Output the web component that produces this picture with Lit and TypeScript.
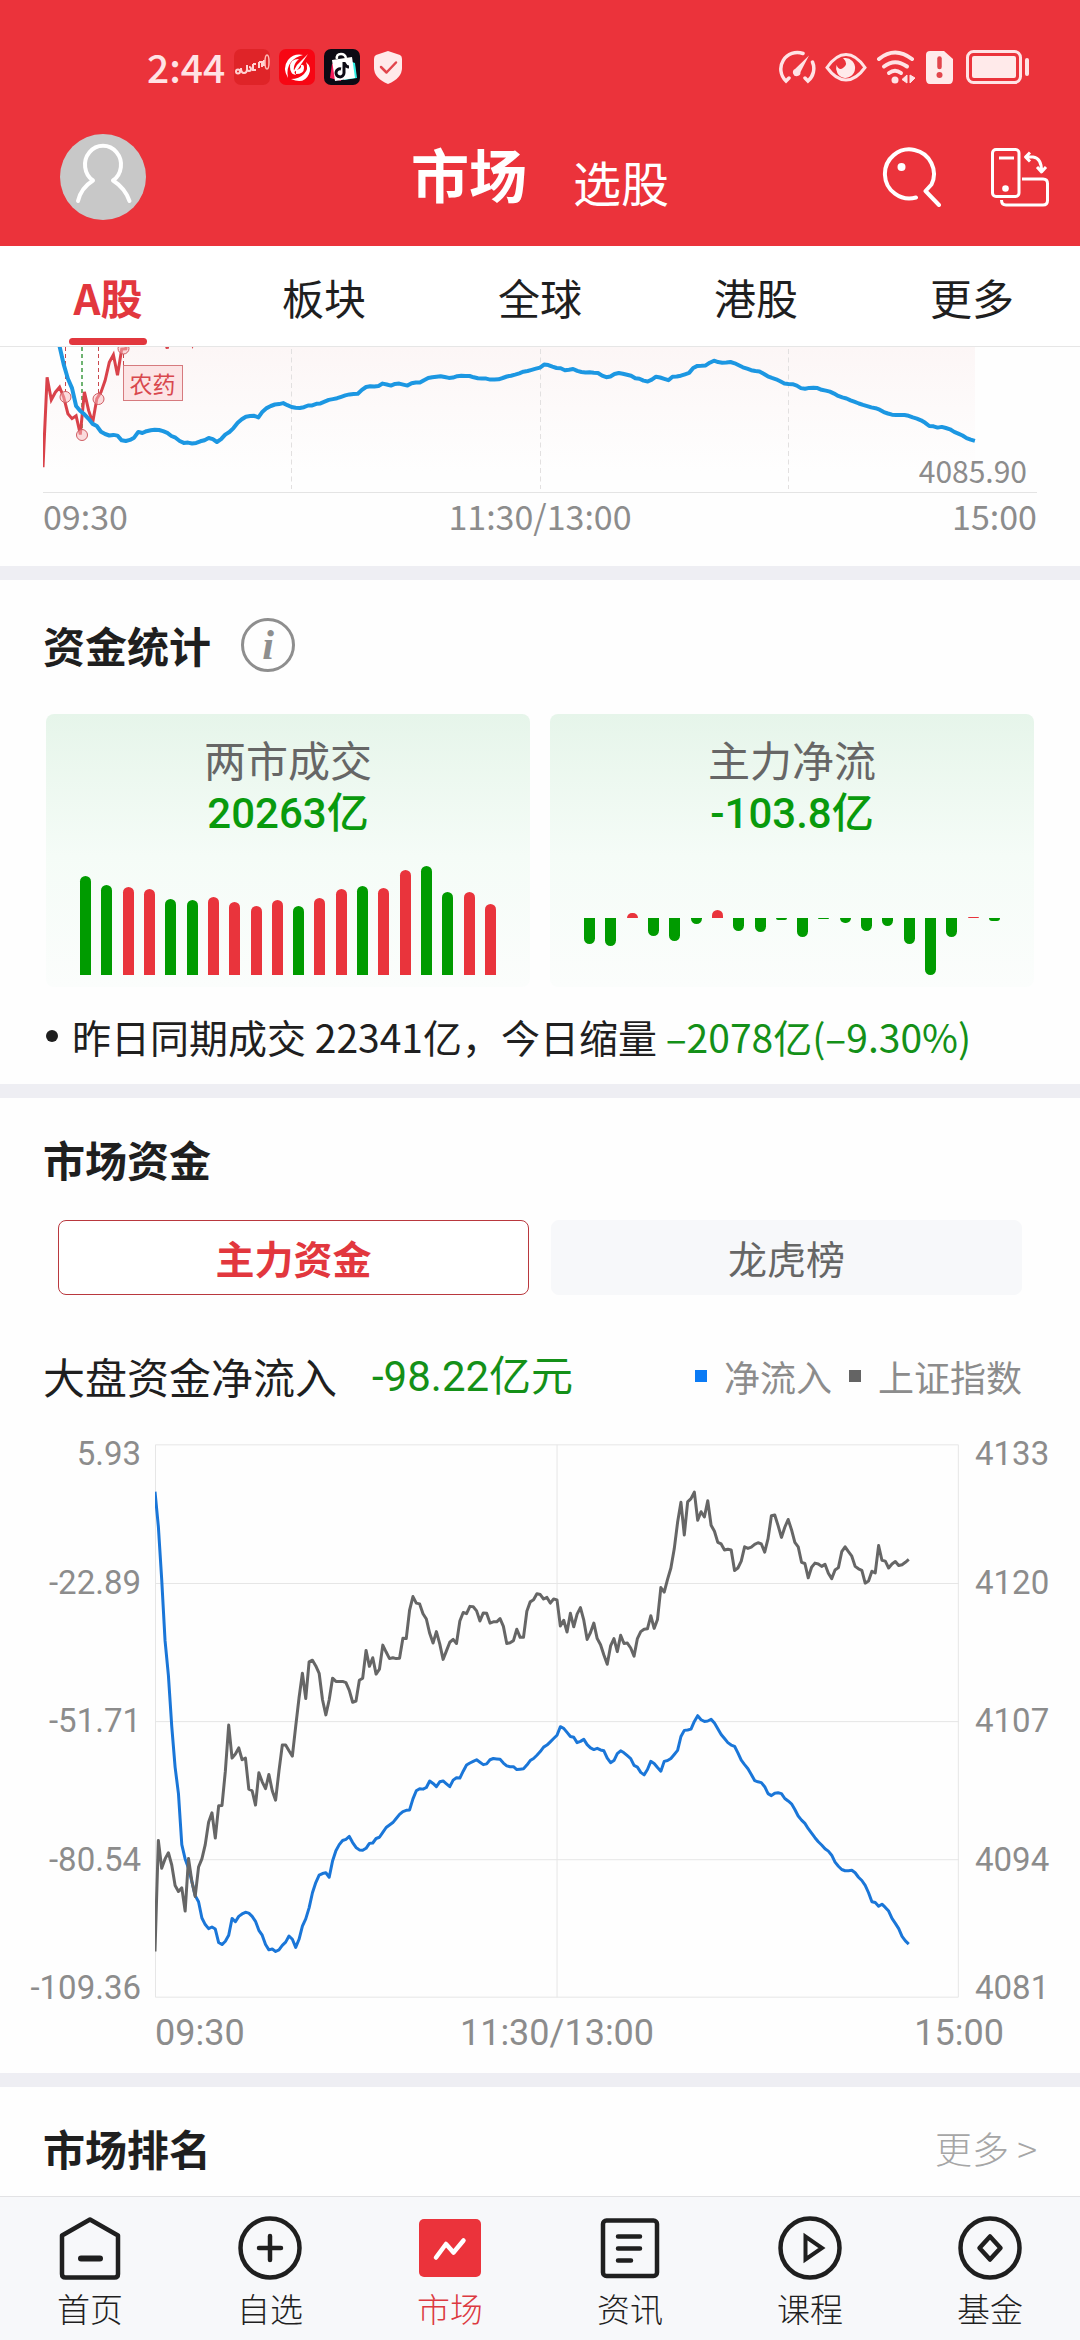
import { LitElement, html, svg, css } from "lit";
import { customElement } from "lit/decorators.js";

const MINUTES = 240;

/** One value per trading minute, on a scale that runs from 60 (top) to 1415 (bottom). */
const INDEX = [
  1302, 1030, 1098, 1075, 1060, 1090, 1140, 1155, 1146, 1203, 1074, 1130, 1167, 1095, 1075, 1040, 985, 962, 1024, 945,
  944, 860, 747, 828, 818, 803, 832, 828, 904, 908, 943, 864, 886, 903, 868, 908, 931, 860, 796, 796, 810, 823, 750,
  680, 620, 682, 592, 588, 602, 620, 685, 722, 685, 632, 640, 640, 640, 643, 662, 691, 688, 637, 632, 564, 603, 582,
  622, 610, 551, 568, 584, 582, 584, 583, 534, 535, 465, 432, 448, 450, 474, 487, 522, 546, 518, 548, 586, 565, 544,
  537, 547, 492, 471, 474, 456, 457, 467, 492, 472, 473, 497, 494, 494, 486, 505, 547, 545, 540, 512, 532, 532, 468,
  445, 440, 425, 427, 438, 434, 448, 438, 440, 504, 490, 519, 473, 506, 475, 459, 490, 537, 520, 497, 535, 550, 575,
  598, 553, 535, 567, 527, 547, 546, 558, 578, 535, 518, 512, 511, 479, 510, 488, 410, 421, 390, 362, 315, 250, 201,
  281, 200, 192, 176, 245, 224, 237, 197, 257, 272, 299, 303, 318, 316, 318, 368, 362, 345, 310, 314, 311, 304, 300,
  303, 323, 290, 234, 232, 258, 287, 262, 243, 268, 299, 310, 348, 351, 386, 360, 350, 352, 358, 353, 375, 388, 367,
  361, 322, 310, 322, 333, 358, 364, 368, 399, 394, 370, 374, 307, 343, 345, 362, 352, 346, 356, 354, 348, 341,
];

const INFLOW = [
  175, 260, 390, 540, 625, 750, 850, 915, 1040, 1075, 1098, 1130, 1165, 1180, 1220, 1236, 1246, 1242, 1247, 1280, 1285,
  1277, 1262, 1221, 1229, 1216, 1210, 1206, 1208, 1216, 1228, 1250, 1262, 1285, 1298, 1296, 1302, 1298, 1287, 1279,
  1264, 1272, 1292, 1272, 1240, 1222, 1195, 1158, 1133, 1115, 1111, 1109, 1120, 1080, 1055, 1040, 1030, 1027, 1020,
  1035, 1047, 1053, 1054, 1049, 1037, 1036, 1025, 1022, 1010, 998, 992, 986, 976, 966, 959, 956, 955, 928, 908, 903,
  904, 900, 884, 890, 898, 886, 884, 891, 898, 882, 876, 877, 860, 845, 840, 836, 832, 838, 844, 842, 832, 829, 830,
  831, 840, 847, 849, 849, 856, 855, 854, 845, 834, 829, 821, 812, 801, 796, 788, 780, 772, 751, 755, 765, 775, 777,
  790, 787, 782, 795, 803, 807, 804, 808, 810, 828, 839, 834, 817, 810, 815, 822, 829, 846, 850, 863, 869, 856, 836,
  841, 851, 860, 836, 834, 829, 819, 809, 775, 760, 759, 757, 738, 724, 734, 738, 737, 733, 742, 756, 770, 780, 790,
  796, 799, 815, 833, 844, 854, 868, 883, 886, 888, 898, 915, 920, 914, 913, 915, 927, 933, 940, 954, 970, 980, 988,
  1001, 1012, 1023, 1033, 1041, 1050, 1056, 1066, 1083, 1093, 1101, 1104, 1104, 1103, 1109, 1120, 1128, 1140, 1158,
  1180, 1182, 1191, 1186, 1194, 1203, 1221, 1233, 1246, 1265, 1276, 1284,
];

const points = (values: number[], width: number, scale: (v: number) => number) =>
  values.map((v, i) => `${((i * width) / MINUTES).toFixed(1)},${scale(v).toFixed(1)}`).join(" ");

/** Turnover bars: height and whether the session closed up. */
const TURNOVER: [number, boolean][] = [
  [99, false], [90, false], [88, true], [86, true], [76, false], [75, false], [78, true], [73, true], [69, true],
  [75, true], [69, false], [77, true], [86, true], [89, false], [87, true], [105, true], [109, false], [83, false],
  [83, true], [71, true],
];

/** Main-force net flow, positive bars rise above the zero line. */
const NET_FLOW = [-26, -28, 5, -18, -23, -6, 8, -13, -14, -2, -19, -1, -5, -13, -8, -26, -57, -19, 1, -3];

const NAV = [
  {
    label: "首页",
    icon: svg`<path d="M4 19.5 32 3.5 60 19.5V58Q60 61.500 56.500 61.500H7.500Q4 61.500 4 58Z" /><path d="M23 42.500H42" stroke-width="6" />`,
  },
  { label: "自选", icon: svg`<circle cx="32" cy="32" r="29.500" /><path d="M32 20V44M21 32H43" />` },
  {
    label: "市场",
    icon: svg`<rect x="1" y="3" width="62" height="58" rx="5" fill="#eb333b" stroke="none" /><path d="M18 41.500 28 28 35.500 36.500 45.500 24.500" stroke="#fff" />`,
  },
  {
    label: "资讯",
    icon: svg`<rect x="5" y="4.500" width="54" height="55.500" rx="3.500" /><path d="M20 20.500H42M20 32.500H42M20 44.500H33" />`,
  },
  {
    label: "课程",
    icon: svg`<circle cx="32" cy="32" r="29.500" /><path d="M27.500 20.500V43.500L44 32Z" stroke-width="4" stroke-linejoin="miter" />`,
  },
  { label: "基金", icon: svg`<circle cx="32" cy="32" r="29.500" /><path d="M32 20.500 42.500 32 32 43.500 21.500 32Z" />` },
];

@customElement("status-bar")
export class StatusBar extends LitElement {
  static styles = css`
    :host {
      display: flex;
      align-items: center;
      justify-content: space-between;
      height: 134px;
      padding: 0 50px 0 147px;
      color: #ffe3e5;
      font-size: 39px;
      font-weight: 500;
      line-height: 48px;
    }
    .side {
      display: flex;
      align-items: center;
      gap: 9px;
    }
    .clock {
      padding-bottom: 2px;
    }
    svg {
      display: block;
      flex: none;
    }
    .shield {
      margin-left: 5px;
    }
    .battery {
      margin-left: 4px;
    }
  `;

  render() {
    return html`
      <div class="side">
        <span class="clock">2:44</span>
        <svg width="36" height="36" viewBox="0 0 36 36" aria-hidden="true">
          <rect width="36" height="36" rx="7" fill="#df2428" />
          <path d="M2 22.500a2 2 0 1 0 4 0 2 2 0 1 0-4 0M7 19q0 5 3 5t3-4M13 16v4q0 2 2 2t2-2-2-2M19 15v6h3M19 15h3M25 13v6M25 13h3v5M30 11v6" fill="none" stroke="#ffd2d2" stroke-width="2" />
          <ellipse cx="33" cy="13" rx="2" ry="7" fill="none" stroke="#ffb9b5" stroke-width="1.500" />
        </svg>
        <svg width="36" height="36" viewBox="0 0 36 36" aria-hidden="true">
          <rect width="36" height="36" rx="7" fill="#f70613" />
          <g fill="#fff">
            <path d="M24 6Q15 4 9 11 3 19 9 29 7 19 12 13 16 8 24 6Z" />
            <path d="M12 30Q25 36 30 25 33 18 27 13 30 20 25 25 20 30 12 30Z" />
            <path d="M20 10Q11 10 11 18 11 25 17 26 14 22 15 18 16 13 20 10Z" />
            <path d="M17 25Q25 25 25 19 25 15 22 16 23 20 17 21Z" />
            <path d="M29 5 19 20 13 25 18 16Z" />
          </g>
        </svg>
        <svg width="36" height="36" viewBox="0 0 36 36" aria-hidden="true">
          <rect width="36" height="36" rx="7" fill="#0c0a14" />
          <path d="M8 15 6 29 17 32 18 12Z" fill="#f51d5c" />
          <path d="M22 11 31 14 33 29 20 31Z" fill="#2ff0e6" />
          <path d="M8 11 28 8 31 29 11 32Z" fill="#fff" />
          <path d="M13 10Q12 5 17 5 21 5 22 9" fill="none" stroke="#fff" stroke-width="2.500" />
          <path d="M20 13V24A4 4 0 1 1 17 20M20 14Q22 18 25 18" fill="none" stroke="#0c0a14" stroke-width="3" />
        </svg>
        <svg class="shield" width="28" height="36" viewBox="0 0 28 36" aria-hidden="true">
          <path d="M14 2 26 6Q28 7 28 10V19Q28 29 14 35 0 29 0 19V10Q0 7 2 6Z" fill="#ffeaea" />
          <path d="M7 18 12.500 23.500 22 13.500" fill="none" stroke="#e2454c" stroke-width="2.500" stroke-linecap="round" stroke-linejoin="round" />
        </svg>
      </div>
      <div class="side">
        <svg width="38" height="34" viewBox="0 0 38 34" aria-hidden="true">
          <g fill="none" stroke="#ffe3e5" stroke-width="3.500" stroke-linecap="round">
            <path d="M25 3.500A16.500 16.500 0 0 0 8 31L11 28" />
            <path d="M34.500 12A16.500 16.500 0 0 1 30 31L27 28" />
          </g>
          <path d="M31 5.500 22.500 22A3.800 3.800 0 1 1 17 19Z" fill="#ffe3e5" />
        </svg>
        <svg width="42" height="34" viewBox="0 0 42 34" aria-hidden="true">
          <path d="M2 17.500Q11 4.500 21 4.500T40 17.500Q31 30 21 30T2 17.500Z" fill="none" stroke="#ffe3e5" stroke-width="3" />
          <path d="M20 8A9.500 10 0 1 1 11.500 15Q14 21 18 18 24 14 18 8Z" fill="#ffeaea" />
        </svg>
        <svg width="41" height="34" viewBox="0 0 41 34" aria-hidden="true">
          <g fill="none" stroke="#ffe3e5" stroke-width="4" stroke-linecap="round">
            <path d="M3 9Q19 -4 36 9" />
            <path d="M8 16.500Q19 8 31 16.500" />
            <path d="M13 23Q19 18.500 25 23" />
          </g>
          <circle cx="19" cy="30" r="3.500" fill="#ffe3e5" />
          <path d="M31 25v8l-5-3.500zM34 25v8l5-5z" fill="#ffe3e5" stroke="#ffe3e5" />
        </svg>
        <svg width="27" height="34" viewBox="0 0 27 34" aria-hidden="true">
          <path d="M4 1H18L27 9V29Q27 34 23 34H4Q0 34 0 29V5Q0 1 4 1Z" fill="#ffeaea" />
          <path d="M13.500 8.500V17" stroke="#e2454c" stroke-width="4.500" stroke-linecap="round" />
          <circle cx="13.500" cy="25" r="3" fill="#e2454c" />
        </svg>
        <svg class="battery" width="64" height="34" viewBox="0 0 64 34" aria-hidden="true">
          <rect x="1.500" y="1.500" width="53" height="31" rx="6" fill="none" stroke="#ffe3e5" stroke-width="3" />
          <rect x="6" y="6" width="44" height="22" rx="2" fill="#ffeaea" />
          <rect x="59" y="8" width="4" height="18" rx="2" fill="#ffe3e5" />
        </svg>
      </div>
    `;
  }
}

@customElement("index-chart")
export class IndexChart extends LitElement {
  static styles = css`
    :host {
      display: block;
      padding: 0 43px 28px;
    }
    .plot {
      position: relative;
      border-bottom: 1px solid #e4e4e4;
    }
    .plot svg {
      display: block;
      width: 100%;
      height: 145px;
    }
    .plot svg * {
      vector-effect: non-scaling-stroke;
    }
    .tag {
      position: absolute;
      left: 8%;
      top: 18px;
      padding: 0 6px;
      border: 1px solid #d67a7e;
      background: #fce4e5;
      color: #d8474d;
      font-size: 23px;
      line-height: 34px;
    }
    .low {
      position: absolute;
      right: 10px;
      bottom: 4px;
      color: #8c8c8c;
      font-size: 30px;
      line-height: 36px;
    }
    .times {
      display: flex;
      justify-content: space-between;
      color: #8c8c8c;
      font-size: 34px;
      line-height: 45px;
    }
  `;

  render() {
    const index = points(INDEX, 994, (v) => 120.3 + (v - 1302) * 0.331);
    const inflow = points(INFLOW, 994, (v) => 13.7 + (v - 724) * 0.1432);
    return html`
      <div class="plot">
        <svg viewBox="0 0 994 145" preserveAspectRatio="none" role="img" aria-label="分时走势">
          <defs>
            <linearGradient id="fade" gradientUnits="userSpaceOnUse" x1="0" y1="0" x2="0" y2="124">
              <stop offset="0" stop-color="#fcf6f6" />
              <stop offset="1" stop-color="#fefefe" />
            </linearGradient>
          </defs>
          <polygon points="0,145 ${index} 932,145" fill="url(#fade)" />
          <g stroke="#e2e0e0" stroke-dasharray="5 3.500">
            <path d="M248.500 2V142M497.500 2V142M745.500 2V142" />
          </g>
          <g fill="none" stroke="#c9484e" stroke-dasharray="4 3">
            <path d="M22.500 0V45M55.500 0V46M80.500 7V19" />
            <path d="M39 0V83" stroke="#3f9a43" stroke-width="1.500" />
          </g>
          <polyline points=${index} fill="none" stroke="#d9424a" stroke-width="3" />
          <polyline points=${inflow} fill="none" stroke="#1c97e2" stroke-width="4" stroke-linejoin="round" />
          <g fill="#f8b9bd" fill-opacity="0.500" stroke="#cf5d63">
            <circle cx="22.500" cy="50" r="5.500" />
            <circle cx="39" cy="88" r="5.500" />
            <circle cx="55.500" cy="52" r="5.500" />
            <circle cx="80.500" cy="1.500" r="5.500" />
          </g>
        </svg>
        <span class="tag">农药</span>
        <span class="low">4085.90</span>
      </div>
      <div class="times"><span>09:30</span><span>11:30/13:00</span><span>15:00</span></div>
    `;
  }
}

@customElement("fund-stats")
export class FundStats extends LitElement {
  static styles = css`
    :host {
      display: block;
      padding: 38px 46px 21px;
    }
    .head {
      display: flex;
      align-items: center;
      gap: 30px;
      margin-left: -3px;
    }
    h2 {
      margin: 0;
      font-size: 42px;
      font-weight: 700;
      line-height: 54px;
    }
    .info {
      display: block;
      width: 54px;
      height: 54px;
      padding: 0;
      border: 3px solid #8e8e8e;
      border-radius: 50%;
      background: none;
      color: #8e8e8e;
      font: italic 700 42px/44px "Liberation Serif", serif;
    }
    .cards {
      display: grid;
      grid-template-columns: 1fr 1fr;
      gap: 20px;
      margin-top: 42px;
    }
    .card {
      padding: 18px 34px 12px;
      border-radius: 8px;
      background: linear-gradient(#e6f5ea, #f5fcf7 52%, #fbfdfc);
      text-align: center;
    }
    .name {
      color: #666;
      font-size: 42px;
      line-height: 54px;
    }
    .value {
      color: #099a0d;
      font-family: Roboto, "Noto Sans CJK SC", sans-serif;
      font-size: 42px;
      font-weight: 500;
      line-height: 56px;
    }
    .bars {
      display: flex;
      justify-content: space-between;
      height: 133px;
    }
    .rising {
      align-items: flex-end;
    }
    .flow {
      align-items: flex-start;
      box-sizing: border-box;
      padding-top: 76px;
    }
    .bar {
      width: 11px;
      border-radius: 6px 6px 0 0;
      background: #009b00;
    }
    .up {
      background: #e9343c;
    }
    .flow .bar {
      border-radius: 0 0 6px 6px;
    }
    .flow .up {
      border-radius: 6px 6px 0 0;
      transform: translateY(-100%);
    }
    .note {
      display: flex;
      align-items: center;
      gap: 14px;
      margin: 22px 0 0;
      font-size: 39px;
      line-height: 54px;
      white-space: pre;
    }
    .dot {
      width: 12px;
      height: 12px;
      border-radius: 50%;
      background: #1f1f1f;
    }
    .down {
      color: #149018;
    }
  `;

  render() {
    return html`
      <div class="head">
        <h2>资金统计</h2>
        <button class="info" aria-label="说明">i</button>
      </div>
      <div class="cards">
        <section class="card">
          <div class="name">两市成交</div>
          <div class="value">20263亿</div>
          <div class="bars rising">
            ${TURNOVER.map(([h, up]) => html`<i class="bar ${up ? "up" : ""}" style="height:${h}px"></i>`)}
          </div>
        </section>
        <section class="card">
          <div class="name">主力净流</div>
          <div class="value">-103.8亿</div>
          <div class="bars flow">
            ${NET_FLOW.map((v) => html`<i class="bar ${v > 0 ? "up" : ""}" style="height:${Math.abs(v)}px"></i>`)}
          </div>
        </section>
      </div>
      <p class="note"><i class="dot"></i><span>昨日同期成交 22341亿，今日缩量 <span class="down">–2078亿(–9.30%)</span></span></p>
    `;
  }
}

@customElement("market-funds")
export class MarketFunds extends LitElement {
  static styles = css`
    :host {
      display: block;
      padding: 34px 0 16px;
    }
    h2 {
      margin: 0 43px;
      font-size: 42px;
      font-weight: 700;
      line-height: 54px;
    }
    .segments {
      display: grid;
      grid-template-columns: 1fr 1fr;
      gap: 22px;
      padding: 0 58px;
      margin-top: 34px;
    }
    .segment {
      height: 75px;
      padding: 0 0 2px;
      border: 1px solid #f7f8fa;
      border-radius: 8px;
      background: #f7f8fa;
      color: #666;
      font: 39px/54px "Noto Sans CJK SC", sans-serif;
    }
    .selected {
      border-color: #b9383e;
      background: #fff;
      color: #e2373e;
      font-weight: 700;
    }
    .summary {
      display: flex;
      align-items: center;
      padding: 0 58px 0 43px;
      margin-top: 53px;
      font-size: 42px;
      line-height: 54px;
    }
    .amount {
      padding-top: 2px;
      margin-left: 35px;
      color: #149018;
      font-family: Roboto, "Noto Sans CJK SC", sans-serif;
    }
    .legend {
      display: flex;
      align-items: center;
      gap: 17px;
      margin-left: auto;
      color: #8c8c8c;
      font-size: 36px;
    }
    .key {
      width: 12px;
      height: 12px;
      background: #0b7bf5;
    }
    .dark {
      background: #646464;
    }
    .chart {
      display: grid;
      grid-template-columns: 155px 1fr 121px;
      margin-top: 40px;
      color: #8c8c8c;
      font-family: Roboto, sans-serif;
      font-size: 33px;
      line-height: 20px;
    }
    .chart svg {
      display: block;
      width: 100%;
      height: 554px;
    }
    .chart svg * {
      vector-effect: non-scaling-stroke;
    }
    .axis {
      display: grid;
      grid-template-rows: 1fr 2fr 2fr 2fr 1fr;
      align-items: center;
      padding-left: 16px;
    }
    .axis :first-child {
      align-self: start;
    }
    .axis :last-child {
      align-self: end;
    }
    .left {
      justify-items: end;
      padding: 0 14px 0 0;
    }
    .times {
      display: grid;
      grid-template-columns: 1fr auto 1fr;
      padding: 0 121px 0 155px;
      margin-top: 11px;
      color: #8c8c8c;
      font-family: Roboto, sans-serif;
      font-size: 36px;
      line-height: 48px;
    }
    .close {
      justify-self: end;
      margin-right: -45px;
    }
  `;

  render() {
    const identity = (v: number) => v;
    return html`
      <h2>市场资金</h2>
      <div class="segments">
        <button class="segment selected" aria-pressed="true">主力资金</button>
        <button class="segment" aria-pressed="false">龙虎榜</button>
      </div>
      <div class="summary">
        <span>大盘资金净流入</span>
        <span class="amount">-98.22亿元</span>
        <span class="legend">
          <i class="key"></i><span>净流入</span><i class="key dark"></i><span>上证指数</span>
        </span>
      </div>
      <div class="chart">
        <div class="axis left">
          <span>5.93</span><span>-22.89</span><span>-51.71</span><span>-80.54</span><span>-109.36</span>
        </div>
        <svg viewBox="0 58 240 1358" preserveAspectRatio="none" role="img" aria-label="大盘资金净流入与上证指数">
          <path
            d="M0.150 60H239.800V1414H0.150ZM0 400H240M0 738.500H240M0 1077H240M120 60V1414"
            fill="none"
            stroke="#e6e6e6"
          />
          <polyline points=${points(INFLOW, 240, identity)} fill="none" stroke="#1a76d8" stroke-width="3" stroke-linejoin="round" />
          <polyline points=${points(INDEX, 240, identity)} fill="none" stroke="#666" stroke-width="3" stroke-linejoin="round" />
        </svg>
        <div class="axis">
          <span>4133</span><span>4120</span><span>4107</span><span>4094</span><span>4081</span>
        </div>
      </div>
      <div class="times"><span>09:30</span><span>11:30/13:00</span><span class="close">15:00</span></div>
    `;
  }
}

@customElement("bottom-nav")
export class BottomNav extends LitElement {
  static styles = css`
    :host {
      display: block;
      border-top: 1px solid #e2e2e4;
      background: #f7f8fa;
    }
    nav {
      display: grid;
      grid-template-columns: repeat(6, 1fr);
      padding: 19px 0 12px;
    }
    a {
      display: flex;
      flex-direction: column;
      align-items: center;
      gap: 8px;
      color: #1f1f1f;
      font-size: 33px;
      font-weight: 300;
      line-height: 40px;
      text-decoration: none;
    }
    .current {
      color: #dc3a41;
    }
    svg {
      width: 64px;
      height: 64px;
      fill: none;
      stroke: #1f1f1f;
      stroke-width: 4.5;
      stroke-linecap: round;
      stroke-linejoin: round;
    }
  `;

  render() {
    return html`
      <nav>
        ${NAV.map(
          ({ label, icon }) => html`
            <a href="#" class=${label === "市场" ? "current" : ""}>
              <svg viewBox="0 0 64 64" aria-hidden="true">${icon}</svg>
              <span>${label}</span>
            </a>
          `,
        )}
      </nav>
    `;
  }
}

@customElement("app-root")
export class AppRoot extends LitElement {
  static styles = css`
    :host {
      display: flex;
      flex-direction: column;
      min-height: 100vh;
      background: #fefefe;
      color: #1f1f1f;
      font-family: "Noto Sans CJK SC", sans-serif;
    }
    header {
      background: #eb333b;
      color: #fff;
    }
    .titlebar {
      display: grid;
      grid-template-columns: 1fr auto 1fr;
      padding: 0 30px 26px 60px;
    }
    .avatar {
      width: 86px;
      height: 86px;
      padding: 0;
      border: 0;
      border-radius: 50%;
      background: #c8c8c8;
    }
    .avatar svg {
      display: block;
    }
    .titles {
      display: flex;
      gap: 46px;
      height: 86px;
      padding-right: 30px;
    }
    h1 {
      margin: 0;
      font-size: 58px;
      font-weight: 700;
      line-height: 78px;
    }
    .alt {
      color: #fff;
      font-size: 48px;
      line-height: 94px;
      text-decoration: none;
    }
    .actions {
      display: flex;
      align-items: center;
      justify-content: flex-end;
      gap: 48px;
    }
    .action {
      padding: 0;
      border: 0;
      background: none;
    }
    .action svg {
      display: block;
    }
    .tabs {
      display: grid;
      grid-template-columns: repeat(5, 1fr);
      border-bottom: 1px solid #e6e6e6;
      background: #fff;
    }
    .tab {
      display: flex;
      flex-direction: column;
      align-items: center;
      gap: 14px;
      height: 100px;
      box-sizing: border-box;
      padding: 24px 0 1px;
      color: #1f1f1f;
      font-size: 42px;
      line-height: 54px;
      text-decoration: none;
    }
    .active {
      color: #e2373e;
      font-weight: 700;
    }
    .active::after {
      content: "";
      width: 78px;
      height: 8px;
      border-radius: 4px;
      background: #e2373e;
    }
    main {
      flex: 1;
    }
    .band {
      height: 14px;
      background: #eeeef3;
    }
    .ranking {
      display: flex;
      align-items: center;
      justify-content: space-between;
      padding: 34px 43px 21px;
    }
    h2 {
      margin: 0;
      font-size: 42px;
      font-weight: 700;
      line-height: 54px;
    }
    .more {
      color: #a6a6a6;
      font-size: 37px;
      font-weight: 300;
      text-decoration: none;
    }
  `;

  render() {
    return html`
      <header>
        <status-bar></status-bar>
        <div class="titlebar">
          <button class="avatar" aria-label="我的">
            <svg width="86" height="86" viewBox="0 0 86 86">
              <path
                d="M18 67Q21 54 33 46.500A18 19 0 1 1 53 46.500Q65 54 69.500 67"
                fill="none"
                stroke="#fff"
                stroke-width="4"
                stroke-linecap="round"
                stroke-linejoin="round"
              />
            </svg>
          </button>
          <div class="titles">
            <h1>市场</h1>
            <a class="alt" href="#">选股</a>
          </div>
          <div class="actions">
            <button class="action" aria-label="搜索">
              <svg width="60" height="60" viewBox="0 0 60 60" fill="none" stroke="#fff" stroke-width="4">
                <path d="M34 50.500A24.500 24.500 0 1 1 49.500 37.500L43.500 44 57 58" stroke-linejoin="round" stroke-linecap="round" />
                <circle cx="19.500" cy="20" r="4" fill="#fff" stroke="none" />
              </svg>
            </button>
            <button class="action" aria-label="旋转屏幕">
              <svg width="60" height="60" viewBox="0 0 60 60" fill="none" stroke="#fff" stroke-width="3" stroke-linejoin="round">
                <rect x="2.500" y="2.500" width="26.500" height="47" rx="3.500" />
                <path d="M9 11H24" />
                <circle cx="15.500" cy="41.500" r="3.300" fill="#fff" stroke="none" />
                <path d="M32 32H53Q57.500 32 57.500 36.500V53.500Q57.500 58 53 58H16Q11.500 58 11.500 53" />
                <path d="M36 10H43Q51.500 11 51.500 24M40 5.500 35.500 10 40 14.500M47 20 51.500 25 56 20" />
              </svg>
            </button>
          </div>
        </div>
      </header>
      <nav class="tabs">
        <a class="tab active" href="#">A股</a>
        <a class="tab" href="#">板块</a>
        <a class="tab" href="#">全球</a>
        <a class="tab" href="#">港股</a>
        <a class="tab" href="#">更多</a>
      </nav>
      <main>
        <index-chart></index-chart>
        <div class="band"></div>
        <fund-stats></fund-stats>
        <div class="band"></div>
        <market-funds></market-funds>
        <div class="band"></div>
        <section class="ranking">
          <h2>市场排名</h2>
          <a class="more" href="#">更多 &gt;</a>
        </section>
      </main>
      <bottom-nav></bottom-nav>
    `;
  }
}
